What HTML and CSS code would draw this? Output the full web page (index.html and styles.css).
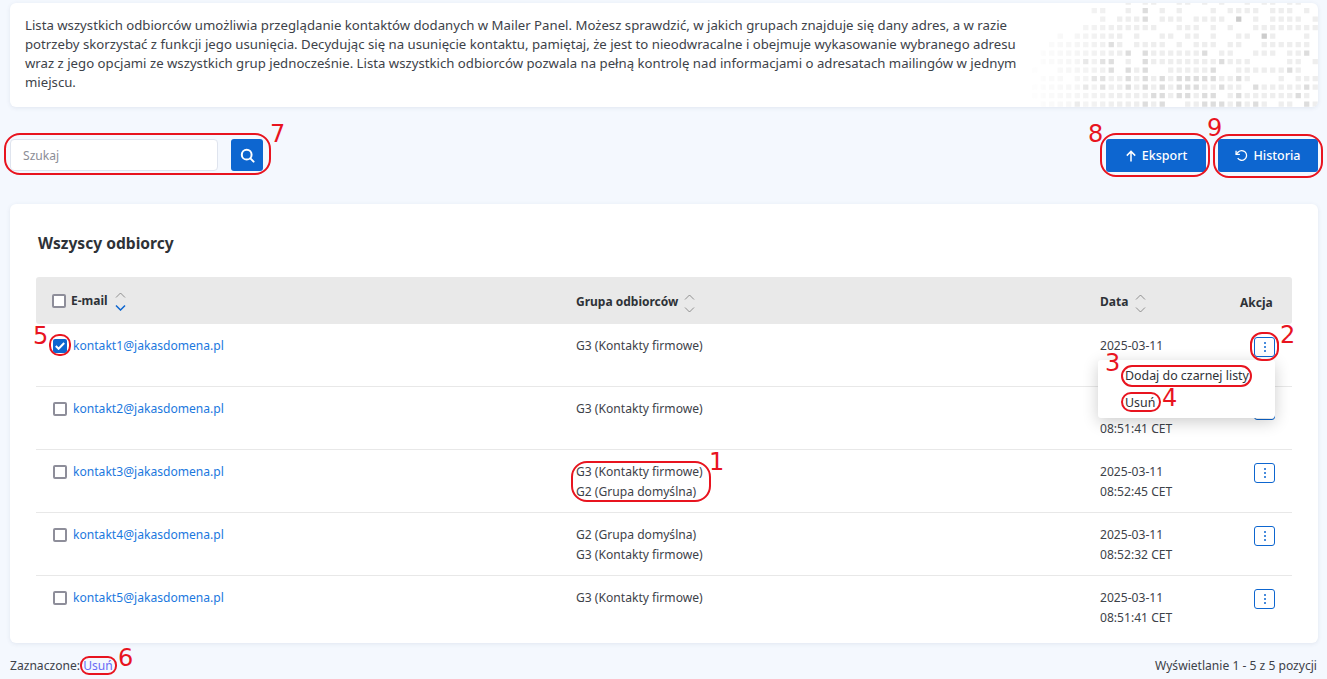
FILE: index.html
```html
<!DOCTYPE html>
<html lang="pl">
<head>
<meta charset="utf-8">
<title>Wszyscy odbiorcy</title>
<link rel="stylesheet" href="styles.css">
</head>
<body>
<section class="hero">
  <svg class="hero-pattern" width="294" height="104" viewBox="0 0 294 104" aria-hidden="true">
    <g transform="translate(8.1 -.83) scale(8.5)" fill="none" stroke-width=".62">
      <path stroke="#eeeeee" d="M11 0h.62M13 0h.62M14 0h.62M17 0h.62M18 0h.62M20 0h.62M22 0h.62M25 0h.62M27 0h.62M28 0h.62M30 0h.62M31 0h.62
      M7 1h.62M8 1h.62M11 1h.62M15 1h.62M17 1h.62M21 1h.62M23 1h.62M24 1h.62M25 1h.62M26 1h.62M28 1h.62M29 1h.62M30 1h.62M32 1h.62
      M8 2h.62M10 2h.62M11 2h.62M12 2h.62M15 2h.62M16 2h.62M17 2h.62M19 2h.62M20 2h.62M21 2h.62M22 2h.62M26 2h.62M28 2h.62M29 2h.62M30 2h.62M31 2h.62M33 2h.62
      M6 3h.62M7 3h.62M8 3h.62M9 3h.62M10 3h.62M11 3h.62M12 3h.62M13 3h.62M14 3h.62M17 3h.62M18 3h.62M19 3h.62M21 3h.62M23 3h.62M26 3h.62M27 3h.62M28 3h.62M29 3h.62M30 3h.62M31 3h.62M32 3h.62M33 3h.62
      M3 4h.62M5 4h.62M6 4h.62M7 4h.62M8 4h.62M9 4h.62M10 4h.62M12 4h.62M15 4h.62M16 4h.62M18 4h.62M19 4h.62M21 4h.62M24 4h.62M25 4h.62M28 4h.62M32 4h.62
      M2 5h.62M3 5h.62M4 5h.62M5 5h.62M6 5h.62M7 5h.62M8 5h.62M10 5h.62M12 5h.62M13 5h.62M14 5h.62M15 5h.62M17 5h.62M19 5h.62M20 5h.62M21 5h.62M23 5h.62M24 5h.62M27 5h.62M28 5h.62M29 5h.62M30 5h.62M31 5h.62M32 5h.62
      M1 6h.62M2 6h.62M3 6h.62M4 6h.62M5 6h.62M6 6h.62M7 6h.62M8 6h.62M9 6h.62M10 6h.62M14 6h.62M15 6h.62M16 6h.62M17 6h.62M18 6h.62M19 6h.62M22 6h.62M23 6h.62M26 6h.62M27 6h.62M28 6h.62M30 6h.62M31 6h.62
      M1 7h.62M2 7h.62M3 7h.62M4 7h.62M5 7h.62M7 7h.62M11 7h.62M14 7h.62M15 7h.62M16 7h.62M17 7h.62M18 7h.62M19 7h.62M20 7h.62M21 7h.62M23 7h.62M24 7h.62M25 7h.62M30 7h.62M31 7h.62M33 7h.62
      M0 8h.62M3 8h.62M4 8h.62M5 8h.62M6 8h.62M7 8h.62M8 8h.62M12 8h.62M16 8h.62M17 8h.62M18 8h.62M19 8h.62M20 8h.62M24 8h.62M25 8h.62M26 8h.62M27 8h.62M28 8h.62M29 8h.62M31 8h.62
      M1 9h.62M2 9h.62M3 9h.62M5 9h.62M6 9h.62M9 9h.62M10 9h.62M12 9h.62M14 9h.62M16 9h.62M22 9h.62M23 9h.62M25 9h.62M29 9h.62M31 9h.62M32 9h.62M33 9h.62
      M0 10h.62M1 10h.62M2 10h.62M3 10h.62M4 10h.62M5 10h.62M7 10h.62M9 10h.62M10 10h.62M12 10h.62M14 10h.62M16 10h.62M20 10h.62M21 10h.62M23 10h.62M24 10h.62M27 10h.62M28 10h.62M29 10h.62M30 10h.62M31 10h.62M33 10h.62
      M0 11h.62M1 11h.62M2 11h.62M3 11h.62M4 11h.62M5 11h.62M6 11h.62M7 11h.62M8 11h.62M9 11h.62M10 11h.62M11 11h.62M12 11h.62M13 11h.62M16 11h.62M19 11h.62M23 11h.62M25 11h.62M26 11h.62M27 11h.62M28 11h.62M29 11h.62M30 11h.62M32 11h.62
      M1 12h.62M2 12h.62M3 12h.62M4 12h.62M6 12h.62M7 12h.62M8 12h.62M9 12h.62M10 12h.62M11 12h.62M12 12h.62M14 12h.62M18 12h.62M19 12h.62M23 12h.62M25 12h.62M27 12h.62M29 12h.62M30 12h.62M33 12h.62"/>
      <path stroke="#dddddd" d="M13 1h.62M13 2h.62M9 5h.62M11 6h.62M13 6h.62M20 6h.62M32 6h.62M6 7h.62M8 7h.62M9 7h.62M13 7h.62M22 7h.62M9 8h.62M11 8h.62M13 8h.62M21 8h.62M30 8h.62M7 9h.62M8 9h.62M11 9h.62M13 9h.62M15 9h.62M17 9h.62M18 9h.62M19 9h.62M20 9h.62M21 9h.62M24 9h.62M6 10h.62M8 10h.62M11 10h.62M13 10h.62M15 10h.62M17 10h.62M18 10h.62M19 10h.62M22 10h.62M26 10h.62M32 10h.62M14 11h.62M15 11h.62M17 11h.62M18 11h.62M20 11h.62M21 11h.62M24 11h.62M31 11h.62M5 12h.62M13 12h.62M15 12h.62M20 12h.62M21 12h.62M22 12h.62M24 12h.62M26 12h.62M32 12h.62"/>
      <path stroke="#cccccc" d="M24 2h.62M27 4h.62"/>
    </g>
  </svg>
  <p class="hero-text">Lista wszystkich odbiorców umożliwia przeglądanie kontaktów dodanych w Mailer Panel. Możesz sprawdzić, w jakich grupach znajduje się dany adres, a w razie<br>potrzeby skorzystać z funkcji jego usunięcia. Decydując się na usunięcie kontaktu, pamiętaj, że jest to nieodwracalne i obejmuje wykasowanie wybranego adresu<br>wraz z jego opcjami ze wszystkich grup jednocześnie. Lista wszystkich odbiorców pozwala na pełną kontrolę nad informacjami o adresatach mailingów w jednym<br>miejscu.</p>
</section>

<div class="toolbar">
  <form class="search">
    <input class="search-input" type="text" placeholder="Szukaj">
    <button class="btn btn-icon" type="button" aria-label="Szukaj">
      <svg width="15" height="15" viewBox="0 0 15 15" fill="none" stroke="#fff" stroke-width="2" stroke-linecap="round"><circle cx="6.7" cy="6.7" r="4.9"/><path d="M10.4 10.4l3.2 3.2"/></svg>
    </button>
  </form>
  <div class="actions">
    <button class="btn btn-text" type="button">
      <svg width="12" height="12" viewBox="0 0 12 12" fill="none" stroke="#fff" stroke-width="1.5"><path d="M6 11.5V1.5M1.8 5.6L6 1.4l4.2 4.2"/></svg>
      Eksport
    </button>
    <button class="btn btn-text" type="button">
      <svg width="13" height="13" viewBox="0 0 24 24" fill="none" stroke="#fff" stroke-width="2.4"><path d="M2 3v7h7"/><path d="M5 17a9 9 0 1 0 1-11.5L2 10"/></svg>
      Historia
    </button>
  </div>
</div>

<main class="card">
  <h1 class="card-title">Wszyscy odbiorcy</h1>
  <table class="grid">
    <colgroup><col class="col-email"><col class="col-group"><col class="col-date"><col class="col-action"></colgroup>
    <thead>
      <tr>
        <th>
          <span class="head-email"><span class="check"></span>E-mail
          <svg class="sort" width="11" height="19" viewBox="0 0 11 19" fill="none"><path d="M1 5.5l4.5-4.5 4.5 4.5" stroke="#777" stroke-width=".8"/><path d="M1 13.5l4.5 4.5 4.5-4.5" stroke="#0d66d0" stroke-width="1.5"/></svg></span>
        </th>
        <th>Grupa odbiorców
          <svg class="sort" width="11" height="19" viewBox="0 0 11 19" fill="none" stroke="#777" stroke-width=".8"><path d="M1 5.5l4.5-4.5 4.5 4.5"/><path d="M1 13.5l4.5 4.5 4.5-4.5"/></svg>
        </th>
        <th>Data
          <svg class="sort" width="11" height="19" viewBox="0 0 11 19" fill="none" stroke="#777" stroke-width=".8"><path d="M1 5.5l4.5-4.5 4.5 4.5"/><path d="M1 13.5l4.5 4.5 4.5-4.5"/></svg>
        </th>
        <th>Akcja</th>
      </tr>
    </thead>
    <tbody>
      <tr>
        <td><span class="cell-email"><span class="check check-on"><svg width="10" height="8" viewBox="0 0 10 8" fill="none" stroke="#fff" stroke-width="2"><path d="M.8 4l2.8 2.8L9.2 1"/></svg></span><a class="mail" href="#">kontakt1@jakasdomena.pl</a></span></td>
        <td>G3 (Kontakty firmowe)</td>
        <td>2025-03-11<br>08:51:41 CET</td>
        <td class="cell-action"><button class="more" type="button" aria-label="Akcja"><i></i><i></i><i></i></button></td>
      </tr>
      <tr>
        <td><span class="cell-email"><span class="check"></span><a class="mail" href="#">kontakt2@jakasdomena.pl</a></span></td>
        <td>G3 (Kontakty firmowe)</td>
        <td>2025-03-11<br>08:51:41 CET</td>
        <td class="cell-action"><button class="more" type="button" aria-label="Akcja"><i></i><i></i><i></i></button></td>
      </tr>
      <tr>
        <td><span class="cell-email"><span class="check"></span><a class="mail" href="#">kontakt3@jakasdomena.pl</a></span></td>
        <td>G3 (Kontakty firmowe)<br>G2 (Grupa domyślna)</td>
        <td>2025-03-11<br>08:52:45 CET</td>
        <td class="cell-action"><button class="more" type="button" aria-label="Akcja"><i></i><i></i><i></i></button></td>
      </tr>
      <tr>
        <td><span class="cell-email"><span class="check"></span><a class="mail" href="#">kontakt4@jakasdomena.pl</a></span></td>
        <td>G2 (Grupa domyślna)<br>G3 (Kontakty firmowe)</td>
        <td>2025-03-11<br>08:52:32 CET</td>
        <td class="cell-action"><button class="more" type="button" aria-label="Akcja"><i></i><i></i><i></i></button></td>
      </tr>
      <tr>
        <td><span class="cell-email"><span class="check"></span><a class="mail" href="#">kontakt5@jakasdomena.pl</a></span></td>
        <td>G3 (Kontakty firmowe)</td>
        <td>2025-03-11<br>08:51:41 CET</td>
        <td class="cell-action"><button class="more" type="button" aria-label="Akcja"><i></i><i></i><i></i></button></td>
      </tr>
    </tbody>
  </table>
</main>

<footer class="foot">
  <span>Zaznaczone: <a class="foot-link" href="#">Usuń</a></span>
  <span>Wyświetlanie 1 - 5 z 5 pozycji</span>
</footer>

<div class="menu">
  <span class="menu-item">Dodaj do czarnej listy</span>
  <span class="menu-item">Usuń</span>
</div>

<span class="ring ring-1"></span><span class="num num-1">1</span>
<span class="ring ring-2"></span><span class="num num-2">2</span>
<span class="ring ring-3"></span><span class="num num-3">3</span>
<span class="ring ring-4"></span><span class="num num-4">4</span>
<span class="ring ring-5"></span><span class="num num-5">5</span>
<span class="ring ring-6"></span><span class="num num-6">6</span>
<span class="ring ring-7"></span><span class="num num-7">7</span>
<span class="ring ring-8"></span><span class="num num-8">8</span>
<span class="ring ring-9"></span><span class="num num-9">9</span>
</body>
</html>
```
FILE: styles.css
```css
* { box-sizing: border-box; }
html, body { height: 100%; }
body {
  position: relative;
  margin: 0;
  padding: 3px 9px 0 10px;
  background: #f4f8fe;
  color: #3d4249;
  font: 12.1px/19.5px "Noto Sans", sans-serif;
  overflow: hidden;
}
.hero {
  position: relative;
  height: 104px;
  padding: 13px 15px;
  background: #fff;
  border-radius: 6px;
  box-shadow: 0 1px 4px rgba(60, 80, 120, .1);
  overflow: hidden;
}
.hero-pattern {
  position: absolute;
  right: 0;
  top: 0;
  -webkit-mask-image: linear-gradient(to right, transparent 0, #000 32%);
  mask-image: linear-gradient(to right, transparent 0, #000 32%);
}
.hero-text {
  position: relative;
  margin: 0;
  font-size: 13.2px;
  line-height: 19px;
  white-space: nowrap;
}

.toolbar {
  display: flex;
  justify-content: space-between;
  align-items: flex-start;
  margin-top: 32px;
}
.search { display: flex; gap: 13px; margin: 0; }
.search-input {
  width: 208px;
  height: 32px;
  padding: 0 12px;
  border: 1px solid #dfe4ee;
  border-radius: 4px;
  background: #fff;
  font: inherit;
  color: inherit;
}
.search-input::placeholder { color: #8b8d96; opacity: 1; }
.actions { display: flex; gap: 12px; }
.btn {
  display: inline-flex;
  align-items: center;
  justify-content: center;
  border: 0;
  border-radius: 3px;
  background: #0d66d0;
  color: #fff;
  font: inherit;
  font-size: 12.5px;
  font-weight: 500;
}
.btn-icon { width: 32px; height: 32px; padding: 0; }
.btn-text { width: 100px; height: 33px; gap: 5px; padding: 0; }

.card {
  margin-top: 32px;
  height: 439px;
  padding: 28px 26px 0;
  background: #fff;
  border-radius: 6px;
  box-shadow: 0 1px 4px rgba(60, 80, 120, .1);
}
.card-title {
  margin: 0 0 23px 2px;
  height: 22px;
  font-size: 15.6px;
  line-height: 22px;
  font-weight: 700;
  color: #2e3237;
}
.grid {
  width: 1256px;
  table-layout: fixed;
  border-collapse: separate;
  border-spacing: 0;
}
.col-email, .col-group { width: 524px; }
.col-date { width: 140px; }
.col-action { width: 68px; }
.grid th {
  height: 47px;
  padding: 4px 0 0 16px;
  background: #e9e9e9;
  text-align: left;
  font-size: 12px;
  font-weight: 700;
  color: #2e3237;
}
.grid th:first-child { border-radius: 3px 0 0 3px; }
.grid th:last-child { border-radius: 0 3px 3px 0; }
.grid td {
  height: 63px;
  padding: 12px 16px 11px;
  vertical-align: top;
  border-bottom: 1px solid #e8e8e8;
}
.grid tbody tr:last-child td { border-bottom: 0; }
.sort { vertical-align: middle; margin-left: 3px; }
.head-email { display: inline-flex; align-items: center; gap: 5px; }
.head-email .sort { margin-left: 2px; }
.cell-email { display: flex; align-items: flex-start; gap: 6px; }
.cell-email .check { margin: 3px 0 0 1px; }
.check {
  display: inline-flex;
  flex: none;
  align-items: center;
  justify-content: center;
  width: 14px;
  height: 14px;
  border: 2px solid #8e8e9a;
  border-radius: 2px;
  background: #fff;
}
.check-on { border: 0; background: #0d66d0; }
.mail { color: #1b78de; text-decoration: none; }
.cell-action { padding-left: 30px !important; padding-right: 0 !important; padding-top: 13px !important; }
.more {
  display: flex;
  flex-direction: column;
  align-items: center;
  justify-content: center;
  gap: 2px;
  width: 21px;
  height: 20px;
  padding: 0;
  border: 1px solid #0d66d0;
  border-radius: 3px;
  background: #fff;
}
.more i { width: 2px; height: 2px; background: #0d66d0; border-radius: 50%; }

.foot {
  display: flex;
  justify-content: space-between;
  margin-top: 13px;
  padding-right: 1px;
}
.foot-link { color: #6a6af5; text-decoration: none; }

.menu {
  position: absolute;
  left: 1098px;
  top: 360px;
  width: 177px;
  height: 58px;
  padding: 6px 27px 0;
  display: flex;
  flex-direction: column;
  gap: 7px;
  background: #fff;
  border-radius: 3px;
  box-shadow: 0 4px 16px rgba(0, 0, 0, .2);
  color: #2e3237;
  font-size: 12.4px;
  white-space: nowrap;
}
.menu-item { display: block; line-height: 19.5px; }

.ring { position: absolute; border: 2px solid #e8141f; border-radius: 12px; pointer-events: none; }
.num { position: absolute; color: #e8141f; font: 24px/24px "DejaVu Sans", sans-serif; }
.ring-1 { left: 571px; top: 461px; width: 140px; height: 41px; border-radius: 16px; }
.ring-2 { left: 1250px; top: 332px; width: 29px; height: 29px; }
.ring-3 { left: 1121px; top: 365px; width: 131px; height: 22px; border-radius: 11px; }
.ring-4 { left: 1121px; top: 392px; width: 40px; height: 20px; border-radius: 10px; }
.ring-5 { left: 49px; top: 334px; width: 22px; height: 22px; border-radius: 10px; }
.ring-6 { left: 80px; top: 656px; width: 37px; height: 19px; border-radius: 9px; }
.ring-7 { left: 4px; top: 133px; width: 267px; height: 42px; border-radius: 16px; }
.ring-8 { left: 1100px; top: 133px; width: 110px; height: 44px; border-radius: 16px; }
.ring-9 { left: 1213px; top: 134px; width: 110px; height: 44px; border-radius: 16px; }
.num-1 { left: 709px; top: 450px; }
.num-2 { left: 1280px; top: 323px; }
.num-3 { left: 1105px; top: 351px; }
.num-4 { left: 1162px; top: 386px; }
.num-5 { left: 33px; top: 324px; }
.num-6 { left: 118px; top: 646px; }
.num-7 { left: 270px; top: 122px; }
.num-8 { left: 1088px; top: 122px; }
.num-9 { left: 1207px; top: 116px; }
```
